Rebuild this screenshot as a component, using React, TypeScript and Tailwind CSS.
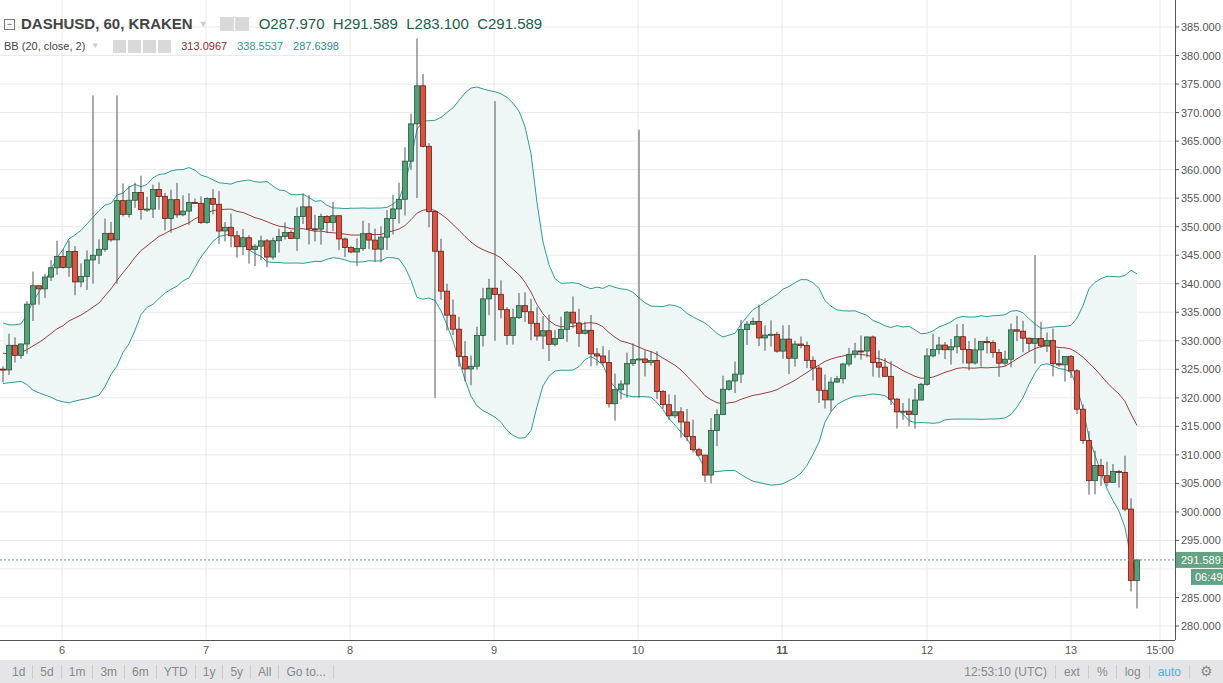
import React from "react"

const W = 1175
const H = 640
const py = (p: number) => 27 + (385 - p) * 5.705
const N = 190
const cx = (i: number) => 3 + i * 6

// rough shape of the close line, [x, price]
const keys: [number, number][] = [
  [-120, 330], [0, 327], [40, 338], [80, 345], [110, 350], [170, 355], [200, 355], [230, 345], [260, 348],
  [300, 350], [340, 348], [380, 350], [400, 352], [410, 365], [418, 373], [428, 355], [440, 340],
  [470, 325], [490, 338], [505, 330], [520, 337], [545, 333], [580, 330], [610, 322], [640, 330],
  [655, 320], [690, 310], [705, 310], [720, 322], [750, 332], [780, 326], [800, 332], [830, 320],
  [870, 330], [900, 318], [930, 324], [960, 330], [1000, 330], [1040, 328], [1070, 328], [1080, 318],
  [1090, 308], [1110, 303], [1120, 305], [1130, 296], [1136, 287], [1141, 291.6],
]
const interp = (x: number) => {
  for (let k = 1; k < keys.length; k++) {
    if (x <= keys[k][0]) {
      const [x0, p0] = keys[k - 1]
      const [x1, p1] = keys[k]
      return p0 + ((x - x0) / (x1 - x0)) * (p1 - p0)
    }
  }
  return keys[keys.length - 1][1]
}
const noise = (i: number) => Math.sin(i * 12.9898) * 43758.5453 % 1

const PRE = 20
const closes: number[] = []
for (let i = -PRE; i < N; i++) closes.push(interp(cx(i)) + noise(i + 100) * 4)
closes[closes.length - 3] = 300.5
closes[closes.length - 2] = 287.97
closes[closes.length - 1] = 291.589

const longWicks: Record<number, [number, number]> = {
  15: [340, 373], 19: [340, 373], 69: [355, 383], 72: [320, 345], 82: [330, 372], 106: [320, 367], 172: [326, 345], 189: [283.1, 291.6],
}

const candles = Array.from({ length: N }, (_, i) => {
  const c = closes[i + PRE]
  const o = closes[i + PRE - 1]
  let hi = Math.max(o, c) + Math.abs(noise(i + 7)) * 3
  let lo = Math.min(o, c) - Math.abs(noise(i + 31)) * 3
  if (i === N - 1) { hi = 291.589; lo = 283.1 }
  if (longWicks[i]) { lo = Math.min(lo, longWicks[i][0]); hi = Math.max(hi, longWicks[i][1]) }
  return { o, c, hi, lo }
})

const bands = Array.from({ length: N }, (_, i) => {
  const s = closes.slice(i + PRE - 19, i + PRE + 1)
  const m = s.reduce((a, b) => a + b, 0) / 20
  const sd = Math.sqrt(s.reduce((a, b) => a + (b - m) ** 2, 0) / 20)
  return { m, u: m + 2 * sd, l: m - 2 * sd }
})

const line = (f: (b: { m: number; u: number; l: number }) => number) =>
  bands.map((b, i) => `${i ? "L" : "M"}${cx(i)},${py(f(b)).toFixed(1)}`).join(" ")
const area =
  line((b) => b.u) + " " + bands.slice().reverse().map((b, j) => `L${cx(N - 1 - j)},${py(b.l).toFixed(1)}`).join(" ") + " Z"

const prices = Array.from({ length: 22 }, (_, k) => 385 - k * 5)
const days: [number, string][] = [[62, "6"], [206, "7"], [350, "8"], [494, "9"], [638, "10"], [782, "11"], [927, "12"], [1071, "13"]]

export default function App() {
  const last = py(291.589)
  return (
    <div className="w-[1223px] h-[683px] bg-white overflow-hidden relative" style={{ fontFamily: "'Liberation Sans', Arial, sans-serif" }}>
      <svg width={1223} height={660} className="block">
        {prices.map((p) => <line key={p} x1={0} x2={W} y1={py(p)} y2={py(p)} stroke="#e9e9ea" />)}
        {days.map(([x, d]) => <line key={d} x1={x} x2={x} y1={0} y2={H} stroke="#e9e9ea" />)}
        <line x1={1160} x2={1160} y1={0} y2={H} stroke="#e9e9ea" />
        <path d={area} fill="#eef6f6" />
        <path d={line((b) => b.u)} fill="none" stroke="#2c9c9c" strokeWidth={1} />
        <path d={line((b) => b.l)} fill="none" stroke="#2c9c9c" strokeWidth={1} />
        <path d={line((b) => b.m)} fill="none" stroke="#a23c3c" strokeWidth={1} />
        {candles.map((c, i) => {
          const up = c.c >= c.o
          const top = py(Math.max(c.o, c.c))
          const h = Math.max(1, py(Math.min(c.o, c.c)) - top)
          return (
            <g key={i}>
              <line x1={cx(i)} x2={cx(i)} y1={py(c.hi)} y2={py(c.lo)} stroke="#555" strokeWidth={1} />
              <rect x={cx(i) - 2.5} y={top} width={5} height={h} fill={up ? "#53a07a" : "#e0503e"} stroke={up ? "#225a3a" : "#6b1d14"} strokeWidth={0.8} />
            </g>
          )
        })}
        <line x1={0} x2={W} y1={last} y2={last} stroke="#53a07a" strokeDasharray="2 2" />
        <line x1={W + 0.5} x2={W + 0.5} y1={0} y2={H} stroke="#555" />
        <line x1={0} x2={W} y1={H + 0.5} y2={H + 0.5} stroke="#555" />
        {prices.filter((p) => p !== 290).map((p) => (
          <g key={p}>
            <line x1={W} x2={W + 4} y1={py(p)} y2={py(p)} stroke="#555" />
            <text x={1181} y={py(p) + 4} fontSize={11} fill="#555">{p.toFixed(3)}</text>
          </g>
        ))}
        <rect x={1176} y={last - 8} width={47} height={16} fill="#63a282" />
        <text x={1181} y={last + 4} fontSize={11} fill="#fff">291.589</text>
        <rect x={1191} y={last + 9} width={32} height={16} fill="#63a282" />
        <text x={1195} y={last + 21} fontSize={11} fill="#fff">06:49</text>
        {days.map(([x, d]) => (
          <text key={d} x={x} y={654} fontSize={11} fill="#555" textAnchor="middle" fontWeight={d === "11" ? 700 : 400}>{d}</text>
        ))}
        <text x={1160} y={654} fontSize={11} fill="#555" textAnchor="middle">15:00</text>
      </svg>

      <div className="absolute left-[4px] top-[13px] flex items-center gap-[6px] text-[15px] text-[#444]">
        <span className="w-[11px] h-[11px] border border-[#777] flex items-center justify-center text-[9px] leading-none">−</span>
        <span className="font-bold">DASHUSD, 60, KRAKEN</span>
        <span className="text-[#ccc] text-[9px]">▼</span>
        <span className="w-[14px] h-[14px] bg-[#d9d9d9] ml-[6px]" />
        <span className="w-[14px] h-[14px] bg-[#d9d9d9] -ml-[5px]" />
        <span className="text-[#1d5e4a] ml-[4px]">O287.970&nbsp;&nbsp;H291.589&nbsp;&nbsp;L283.100&nbsp;&nbsp;C291.589</span>
      </div>
      <div className="absolute left-[4px] top-[38px] flex items-center gap-[6px] text-[11px] text-[#444]">
        <span>BB (20, close, 2)</span>
        <span className="text-[#ccc] text-[8px]">▼</span>
        <span className="flex gap-[2px] ml-[8px]">
          {[0, 1, 2, 3].map((k) => <span key={k} className="w-[13px] h-[13px] bg-[#d9d9d9]" />)}
        </span>
        <span className="text-[#8b2a2a] ml-[4px]">313.0967</span>
        <span className="text-[#2a9a9a] ml-[4px]">338.5537</span>
        <span className="text-[#2a8a8a] ml-[4px]">287.6398</span>
      </div>

      <div className="h-[23px] bg-[#e5e5e8] flex items-center text-[12px] text-[#888]">
        {["1d", "5d", "1m", "3m", "6m", "YTD", "1y", "5y", "All", "Go to..."].map((t) => (
          <span key={t} className="px-[7px] border-r border-[#ccc] last:border-r-0 leading-[14px] first:pl-[12px]">{t}</span>
        ))}
        <div className="flex-1" />
        <span className="px-[8px] border-r border-[#ccc] leading-[14px]">12:53:10 (UTC)</span>
        <span className="px-[8px] border-r border-[#ccc] leading-[14px]">ext</span>
        <span className="px-[8px] border-r border-[#ccc] leading-[14px]">%</span>
        <span className="px-[8px] border-r border-[#ccc] leading-[14px]">log</span>
        <span className="px-[8px] border-r border-[#ccc] leading-[14px] text-[#4ab0e0]">auto</span>
        <span className="px-[10px] text-[14px]">⚙</span>
      </div>
    </div>
  )
}
